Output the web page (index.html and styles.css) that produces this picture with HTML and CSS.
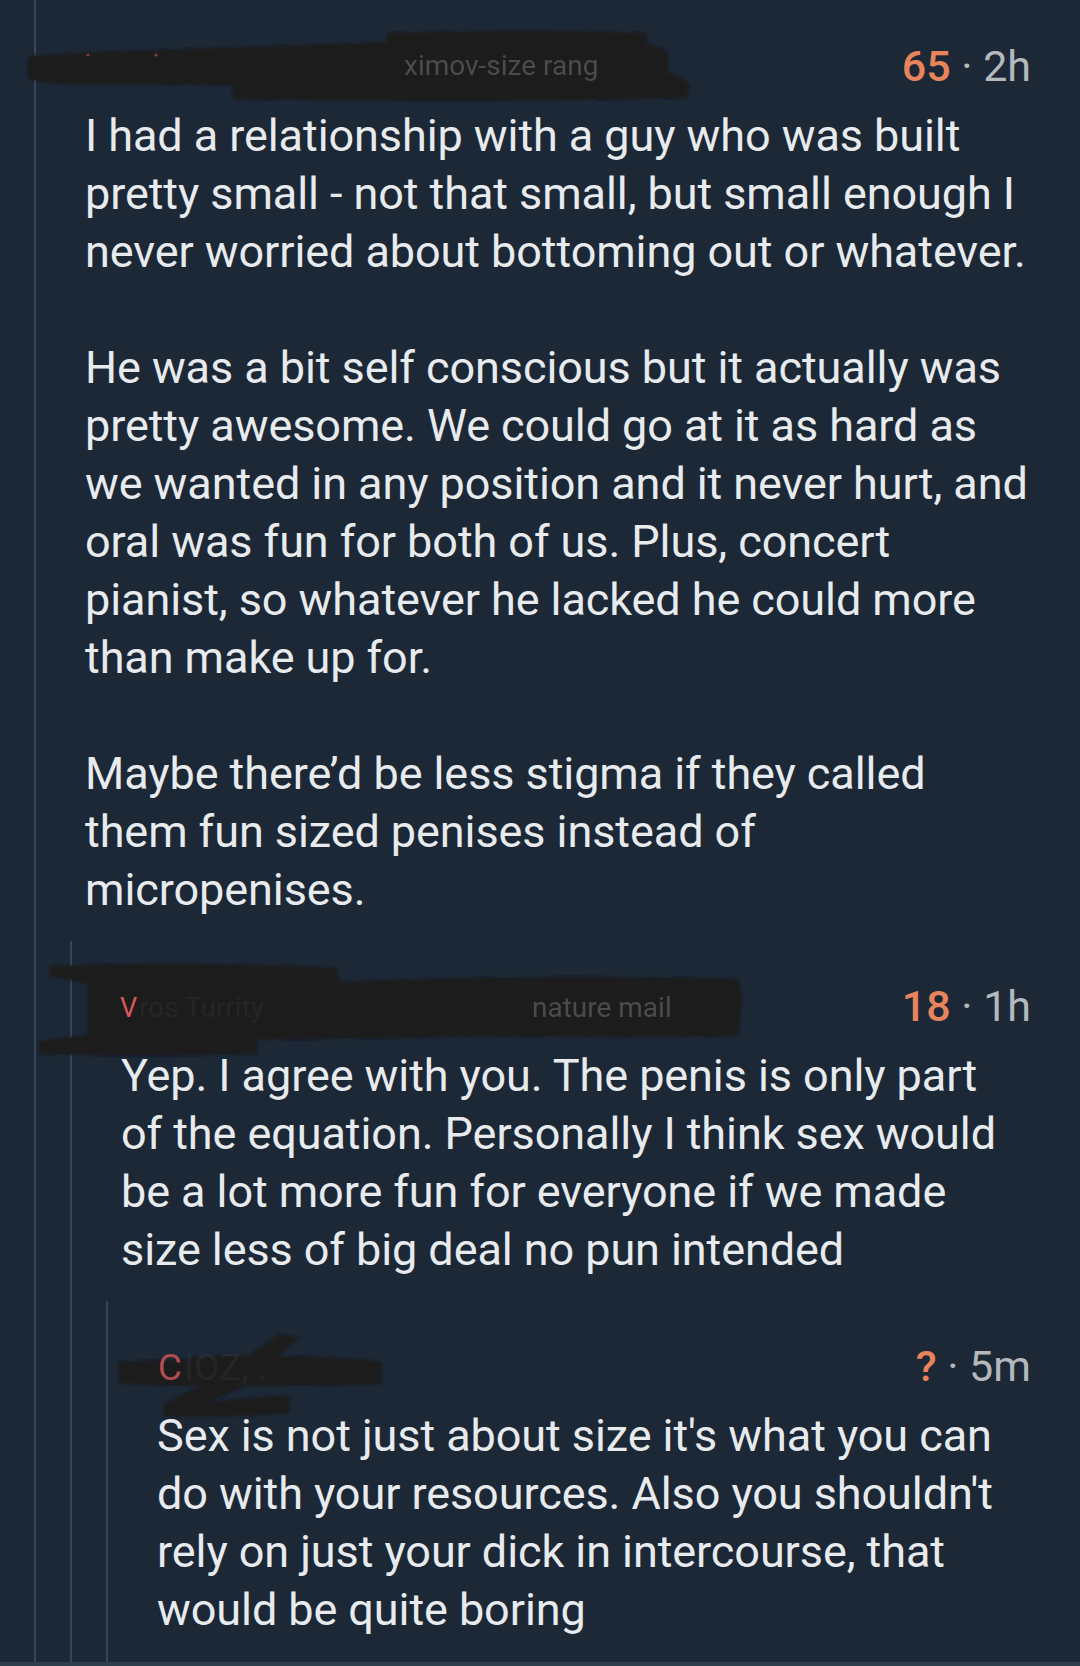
FILE: index.html
```html
<!DOCTYPE html>
<html lang="en">
<head>
<meta charset="utf-8">
<title>Comments</title>
<link rel="stylesheet" href="styles.css">
</head>
<body>
<div class="page">
  <svg class="defs" width="0" height="0">
    <filter id="soft" x="-5%" y="-20%" width="110%" height="140%">
      <feGaussianBlur stdDeviation="1.3"/>
    </filter>
  </svg>
  <div class="comment level1">
    <div class="head">
      <svg class="scribble s1" width="680" height="80" viewBox="20 25 680 80">
        <path class="ink" d="M30 56 C 100 50, 300 46, 386 42 L 388 33 C 480 30, 580 30, 645 33 L 648 44 C 660 47, 668 50, 668 56 L 668 72 C 680 76, 690 82, 690 88 L 686 98 C 560 101, 380 101, 234 99 L 232 86 C 180 84, 90 84, 60 84 L 30 80 C 26 70, 26 62, 30 56 Z"/>
        <circle cx="88" cy="55" r="1.6" class="dot"/>
        <circle cx="156" cy="55" r="1.6" class="dot"/>
        <text x="404" y="75" class="ghost">ximov-size rang</text>
      </svg>
      <div class="meta"><span class="score">65</span> · 2h</div>
    </div>
    <div class="body">
      <p>I had a relationship with a guy who was built pretty small - not that small, but small enough I never worried about bottoming out or whatever.</p>
      <p>He was a bit self conscious but it actually was pretty awesome. We could go at it as hard as we wanted in any position and it never hurt, and oral was fun for both of us. Plus, concert pianist, so whatever he lacked he could more than make up for.</p>
      <p>Maybe there’d be less stigma if they called them fun sized penises instead of micropenises.</p>
    </div>

    <div class="comment level2">
      <div class="head">
        <svg class="scribble s2" width="725" height="105" viewBox="35 955 725 105">
          <path class="ink" d="M49 966 C 120 963, 260 963, 337 968 L 340 982 C 450 977, 600 975, 738 979 L 742 1000 L 738 1036 C 640 1038, 540 1037, 480 1036 C 420 1038, 330 1039, 257 1040 L 258 1054 C 180 1056, 90 1056, 40 1054 L 38 1042 C 60 1038, 80 1036, 87 1035 L 87 983 C 70 980, 55 978, 49 975 Z"/>
          <text x="120" y="1017" class="red">V</text>
          <text x="139" y="1017" class="ghost dim">ros Turrity</text>
          <text x="532" y="1017" class="ghost">nature mail</text>
        </svg>
        <div class="meta"><span class="score">18</span> · 1h</div>
      </div>
      <div class="body">
        <p>Yep. I agree with you. The penis is only part of the equation. Personally I think sex would be a lot more fun for everyone if we made size less of big deal no pun intended</p>
      </div>

      <div class="comment level3">
        <div class="head">
          <svg class="scribble s3" width="290" height="95" viewBox="110 1325 290 95">
            <path class="ink" d="M178 1360 C 200 1356, 225 1355, 250 1355 L 280 1334 L 300 1338 L 278 1356 C 320 1357, 360 1358, 382 1362 L 382 1384 C 330 1386, 270 1386, 245 1386 L 210 1402 C 245 1398, 272 1396, 290 1396 L 290 1413 C 250 1416, 200 1418, 165 1416 L 163 1404 L 200 1386 C 170 1386, 140 1385, 118 1383 L 118 1362 C 140 1360, 160 1361, 178 1360 Z"/>
            <text x="158" y="1380" class="red big cover">C</text>
            <text x="184" y="1380" class="ghost dim big">IOZ, .</text>
          </svg>
          <div class="meta"><span class="score">?</span> · 5m</div>
        </div>
        <div class="body">
          <p>Sex is not just about size it's what you can do with your resources. Also you shouldn't rely on just your dick in intercourse, that would be quite boring</p>
        </div>
      </div>
    </div>
  </div>
  <div class="bottom-edge"></div>
</div>
</body>
</html>
```

FILE: styles.css
```css
html, body {
  margin: 0;
  padding: 0;
  background: #1c2836;
}

.page {
  width: 1080px;
  height: 1666px;
  overflow: hidden;
  display: flex;
  flex-direction: column;
  font-family: Roboto, "Noto Sans", "Liberation Sans", sans-serif;
  color: #e8ebee;
}

.defs {
  position: absolute;
  width: 0;
  height: 0;
}

.comment {
  border-left: 2px solid #33465a;
  padding-top: 36px;
  display: flex;
  flex-direction: column;
}

.level1 {
  margin-left: 34px;
  margin-right: 49px;
  padding-top: 37px;
  flex: 1;
}

.level2,
.level3 {
  margin-left: 34px;
  flex: 1;
}

.head {
  position: relative;
  height: 58px;
  padding-left: 49px;
  display: flex;
  justify-content: flex-end;
  align-items: center;
}

.meta {
  font-size: 43px;
  line-height: 58px;
  color: #b4b8bc;
  position: relative;
  z-index: 1;
}

.score {
  color: #e8845c;
  font-weight: 500;
}

.body {
  padding-left: 49px;
  margin-top: 12px;
  margin-bottom: 22px;
  font-size: 45px;
  line-height: 58px;
  letter-spacing: -0.08px;
}

.level2 > .body,
.level3 > .body {
  padding-right: 20px;
}

.body p {
  margin: 0;
}

.body p + p {
  margin-top: 58px;
}

.scribble {
  position: absolute;
  overflow: visible;
}

.s1 { left: -16px; top: -12px; }
.s2 { left: -37px; top: -22px; }
.s3 { left: 2px; top: -12px; }

.ink {
  fill: #1b1c1f;
  filter: url(#soft);
}

.dot {
  fill: #8a3a40;
}

.ghost {
  font-family: Roboto, "Liberation Sans", sans-serif;
  font-size: 28px;
  fill: #8d9196;
  opacity: 0.4;
}

.ghost.dim {
  opacity: 0.08;
}

.red {
  font-family: Roboto, "Liberation Sans", sans-serif;
  font-size: 27px;
  fill: #d6575c;
}

.red.cover {
  opacity: 0.8;
}

.big {
  font-size: 37px;
}

.bottom-edge {
  height: 4px;
  background: #2e3d4c;
  flex: none;
}
```
